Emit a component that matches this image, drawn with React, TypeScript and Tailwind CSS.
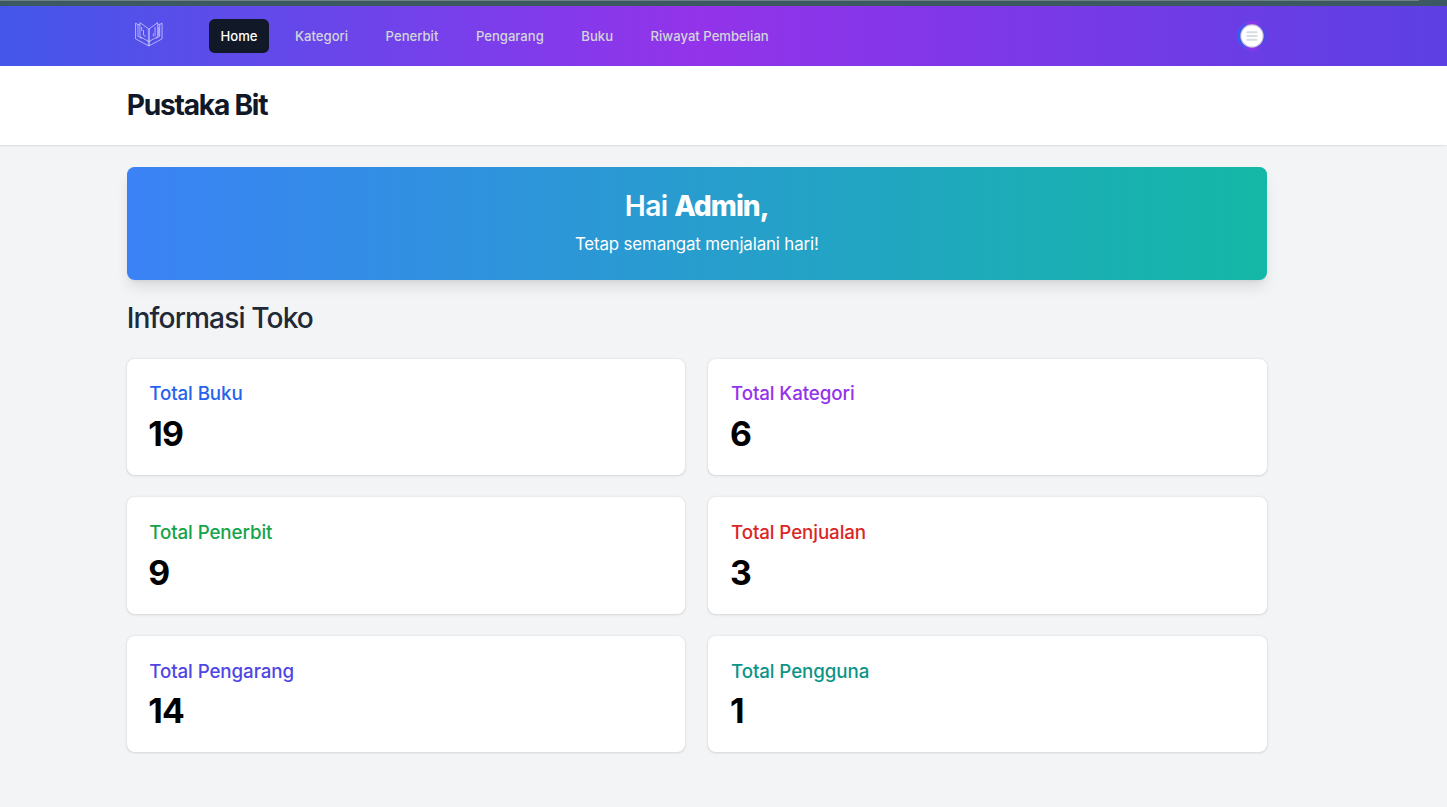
import React from "react";

const links = ["Kategori", "Penerbit", "Pengarang", "Buku", "Riwayat Pembelian"];

const stats = [
  { label: "Total Buku", value: 19, color: "text-[#2563eb]" },
  { label: "Total Kategori", value: 6, color: "text-[#9333ea]" },
  { label: "Total Penerbit", value: 9, color: "text-[#16a34a]" },
  { label: "Total Penjualan", value: 3, color: "text-[#dc2626]" },
  { label: "Total Pengarang", value: 14, color: "text-[#4f46e5]" },
  { label: "Total Pengguna", value: 1, color: "text-[#0d9488]" },
];

function BookLogo() {
  return (
    <svg viewBox="0 0 28 25" className="h-[26.5px] w-[29.5px]" fill="none" stroke="#fff" strokeOpacity="0.7" strokeWidth="0.8">
      <path d="M14 24.2L.6 17V1.2L3 2.4M14 24.2L27.4 17V1.2L25 2.4" />
      <path d="M3 14.5V2.2L5 3.2M3 14.5L7 16.6M25 14.5V2.2L23 3.2M25 14.5L21 16.6" />
      <path d="M14 7L5 .6V14.6L14 19.8L23 14.6V.6L14 7" />
      <path d="M13.5 7V24M14.6 7V24" strokeWidth=".7" />
      <path d="M8.6 8V13.5M10 13V14.8M18.5 11.5V14.5M20.3 5V14M24 5V14M6.8 5V9" />
    </svg>
  );
}

function MenuAvatar() {
  return (
    <svg viewBox="0 0 30 30" className="h-8 w-8">
      <defs>
        <linearGradient id="ring" x1="0" x2="1" y1="0" y2="0">
          <stop offset="0" stopColor="#2563eb" />
          <stop offset=".5" stopColor="#9333ea" />
          <stop offset="1" stopColor="#4f46e5" />
        </linearGradient>
      </defs>
      <circle cx="15" cy="15" r="15" fill="url(#ring)" />
      <circle cx="15" cy="15" r="11.7" fill="#c9c5dc" />
      <circle cx="15" cy="15" r="10.6" fill="#fff" />
      <path d="M10.3 11.2h9.4M10.3 15h9.4M10.3 18.8h9.4" stroke="#d8dce3" strokeWidth="1.9" strokeLinecap="round" />
    </svg>
  );
}

export default function App() {
  return (
    <div className="h-[807px] overflow-hidden bg-[#f3f4f6] font-['Inter','Liberation_Sans',sans-serif]">
      <div className="h-1.5 bg-[#3c5860]">
        <div className="h-px w-[1419px] bg-[#6c8085]" />
      </div>
      <div className="-ml-[53.5px] w-[1500.5px]">
        <div className="[zoom:0.9375]">
          <nav className="bg-[linear-gradient(to_right,#4457ea_57px,#9333ea_800px,#5c40e3_1600px)]">
            <div className="mx-auto flex h-16 max-w-7xl items-center justify-between px-8">
              <div className="flex items-center">
                <div className="ml-[9px] flex w-[31px] justify-start pb-1">
                  <BookLogo />
                </div>
                <div className="ml-12 flex items-baseline gap-4 text-sm font-medium text-[#d1d5db]">
                  <a href="#" className="rounded-md bg-[#111827] px-3 py-2 text-white">Home</a>
                  {links.map((l) => (
                    <a key={l} href="#" className="rounded-md px-3 py-2">{l}</a>
                  ))}
                </div>
              </div>
              <MenuAvatar />
            </div>
          </nav>
          <header className="bg-white shadow-[0_1px_3px_0_rgb(0_0_0/0.1),0_1px_2px_-1px_rgb(0_0_0/0.1)]">
            <div className="mx-auto max-w-7xl px-8 py-6">
              <h1 className="text-3xl font-bold tracking-[-1.3px] text-[#111827]">Pustaka Bit</h1>
            </div>
          </header>
          <main className="mx-auto max-w-7xl px-8 py-6">
            <section className="rounded-lg bg-[linear-gradient(to_right,#3b82f6,#14b8a6)] p-6 text-center text-white shadow-lg">
              <h2 className="text-3xl font-semibold tracking-[-0.6px]">
                Hai <span className="font-extrabold tracking-[-1.05px]">Admin,</span>
              </h2>
              <p className="mt-2 text-lg tracking-[-0.15px]">Tetap semangat menjalani hari!</p>
            </section>
            <h2 className="my-6 text-3xl font-[550] tracking-[-0.94px] text-[#1f2937]">Informasi Toko</h2>
            <div className="grid grid-cols-2 gap-x-[25px] gap-y-6">
              {stats.map((s) => (
                <div key={s.label} className="rounded-lg bg-white p-6 shadow">
                  <h3 className={`text-xl leading-7 font-medium tracking-[-0.1px] ${s.color}`}>{s.label}</h3>
                  <p className="mt-2 -ml-px text-4xl font-bold tracking-[-1px] text-black">{s.value}</p>
                </div>
              ))}
            </div>
          </main>
        </div>
      </div>
    </div>
  );
}
